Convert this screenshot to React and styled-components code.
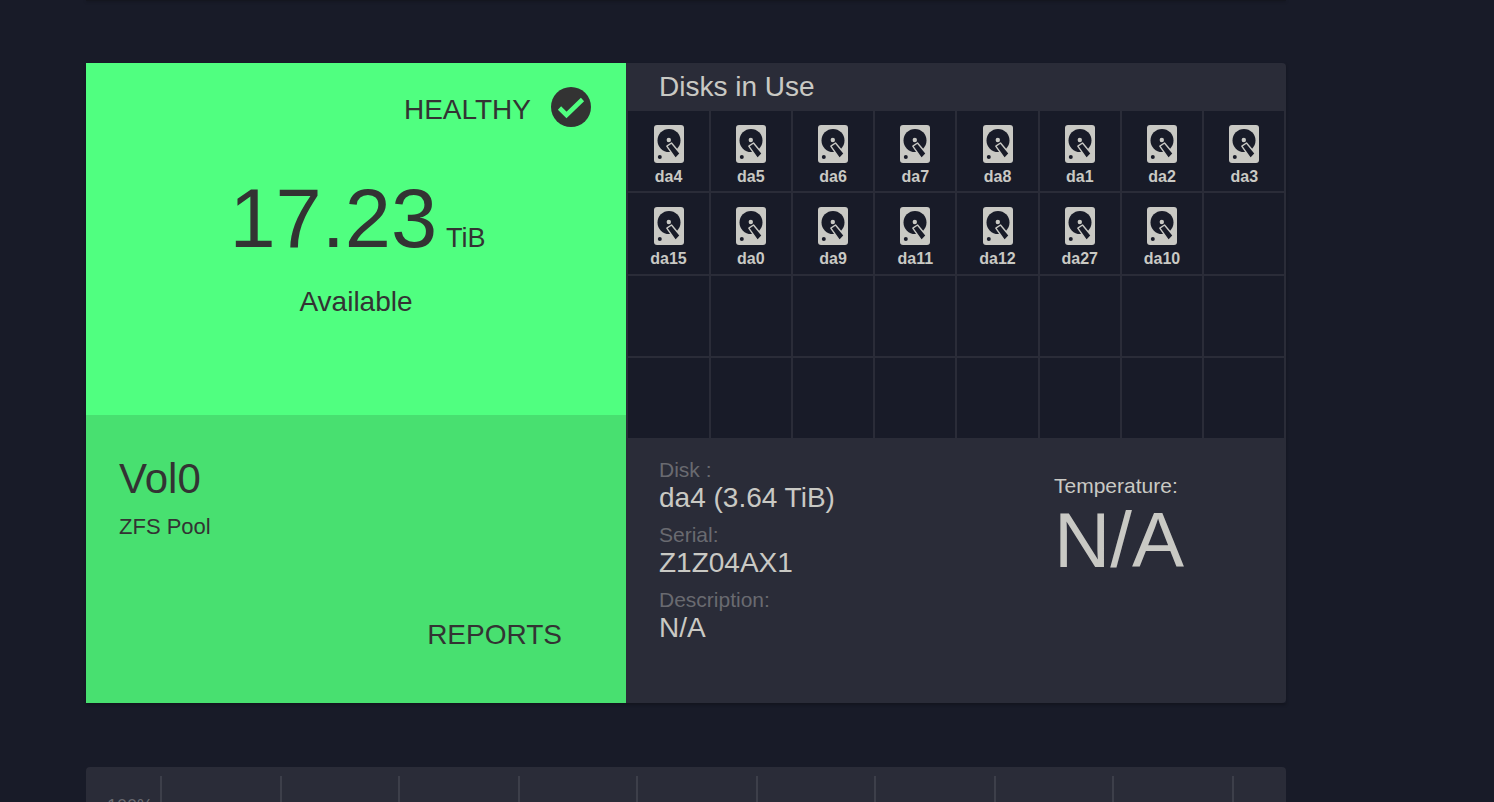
import React from "react";
import styled, { createGlobalStyle } from "styled-components";

const Global = createGlobalStyle`
  html, body { margin: 0; padding: 0; height: 802px; overflow: hidden; background: #181b28; }
  #root { height: 802px; overflow: hidden; font-family: "Liberation Sans", Arial, sans-serif; }
`;

const Page = styled.div`
  width: 1200px;
  margin-left: 86px;
  display: flex;
  flex-direction: column;
`;
const TopEdge = styled.div`
  height: 1px;
  margin-bottom: 62px;
  background: #14161f;
  box-shadow: 0 1px 3px rgba(0, 0, 0, 0.35);
`;
const PoolCard = styled.section`
  height: 640px;
  display: grid;
  grid-template-columns: 540px 660px;
  margin-bottom: 64px;
  box-shadow: 0 2px 3px rgba(0, 0, 0, 0.25);
`;
const Status = styled.div`
  display: flex;
  flex-direction: column;
`;
const StatusTop = styled.div`
  height: 352px;
  background: #50ff80;
  color: #333;
  box-sizing: border-box;
  display: flex;
  flex-direction: column;
  padding-top: 24px;
`;
const HealthRow = styled.div`
  display: flex;
  justify-content: flex-end;
  align-items: center;
  gap: 20px;
  padding-right: 35px;
  height: 40px;
`;
const HealthLabel = styled.span`
  font-size: 28px;
  line-height: 32px;
  margin-top: 6px;
`;
const Capacity = styled.div`
  display: flex;
  justify-content: center;
  align-items: baseline;
  margin-top: 48px;
  padding-left: 3px;
  height: 88px;
  line-height: 88px;
`;
const Big = styled.span`
  font-size: 83px;
`;
const Unit = styled.span`
  font-size: 27px;
  margin-left: 9px;
`;
const Available = styled.div`
  text-align: center;
  font-size: 28px;
  line-height: 30px;
  margin-top: 24px;
`;
const StatusBottom = styled.div`
  height: 288px;
  background: #48e070;
  color: #333;
  box-sizing: border-box;
  padding: 40px 64px 0 33px;
  display: flex;
  flex-direction: column;
`;
const PoolName = styled.div`
  font-size: 42px;
  line-height: 48px;
`;
const PoolType = styled.div`
  font-size: 22px;
  line-height: 24px;
  margin-top: 12px;
`;
const Reports = styled.div`
  margin-top: auto;
  margin-bottom: 53px;
  align-self: flex-end;
  font-size: 28px;
  line-height: 30px;
`;
const DiskPanel = styled.div`
  background: #2a2c38;
  border-radius: 0 4px 4px 0;
  display: flex;
  flex-direction: column;
  color: #c9c9c4;
`;
const PanelTitle = styled.div`
  height: 47px;
  box-sizing: border-box;
  padding: 8px 0 0 33px;
  font-size: 28px;
  line-height: 32px;
`;
const Grid = styled.div`
  height: 328px;
  background: #2a2c38;
  display: grid;
  grid-template-columns: repeat(8, 1fr);
  grid-template-rows: repeat(4, 1fr);
  gap: 2px;
  padding: 1px 1.6px 0 2.4px;
  box-sizing: border-box;
`;
const Cell = styled.div`
  background: #181b28;
  display: flex;
  flex-direction: column;
  align-items: center;
  padding-top: 14px;
  box-sizing: border-box;
  overflow: hidden;
`;
const DiskName = styled.div`
  font-size: 16px;
  font-weight: bold;
  line-height: 18px;
  margin-top: 5px;
`;
const Details = styled.div`
  flex: 1;
  display: grid;
  grid-template-columns: 395px 1fr;
  padding: 21px 0 0 33px;
`;
const Fact = styled.div`
  margin-bottom: 11px;
`;
const FactLabel = styled.div`
  color: #696a70;
  font-size: 21px;
  line-height: 22px;
`;
const FactValue = styled.div`
  font-size: 28px;
  line-height: 30px;
  margin-top: 2px;
`;
const Temperature = styled.div`
  padding-top: 15px;
`;
const TempLabel = styled.div`
  font-size: 21px;
  line-height: 24px;
`;
const TempValue = styled.div`
  font-size: 78px;
  line-height: 84px;
`;
const ChartCard = styled.section`
  height: 80px;
  background: #2a2c38;
  border-radius: 4px 4px 0 0;
  position: relative;
  overflow: hidden;
`;
const Tick = styled.span`
  position: absolute;
  top: 9px;
  bottom: 0;
  width: 2px;
  background: #3d3f4a;
`;
const AxisLabel = styled.span`
  position: absolute;
  left: 21px;
  top: 29px;
  font-size: 18px;
  line-height: 20px;
  color: #696a70;
`;

const Check = () => (
  <svg width="40" height="40" viewBox="0 0 40 40" aria-hidden="true">
    <circle cx="20" cy="20" r="20" fill="#333" />
    <path d="M8.5 21 L15.5 28 L31.5 12.5" fill="none" stroke="#50ff80" strokeWidth="4.6" />
  </svg>
);

const Disk = () => (
  <svg width="30" height="38" viewBox="0 0 30 38" aria-hidden="true">
    <rect width="30" height="38" rx="3" fill="#c9c9c4" />
    <circle cx="15" cy="15.5" r="11.5" fill="#181b28" />
    <circle cx="14.8" cy="15" r="2.2" fill="#c9c9c4" />
    <path
      d="M12.8 21.2 L17.5 18 L26.2 28.5 L21.5 33.5 Z"
      fill="#181b28"
      stroke="#c9c9c4"
      strokeWidth="1.4"
      strokeLinejoin="round"
    />
    <circle cx="5.8" cy="32" r="2" fill="#181b28" />
  </svg>
);

const disks = ["da4","da5","da6","da7","da8","da1","da2","da3","da15","da0","da9","da11","da12","da27","da10"];
const cells = Array.from({ length: 32 }, (_, i) => disks[i] || null);
const ticks = [74, 194, 312, 432, 550, 670, 788, 908, 1026, 1146];

export default function App() {
  return (
    <>
      <Global />
      <Page>
        <TopEdge />
        <PoolCard>
          <Status>
            <StatusTop>
              <HealthRow><HealthLabel>HEALTHY</HealthLabel><Check /></HealthRow>
              <Capacity><Big>17.23</Big><Unit>TiB</Unit></Capacity>
              <Available>Available</Available>
            </StatusTop>
            <StatusBottom>
              <PoolName>Vol0</PoolName>
              <PoolType>ZFS Pool</PoolType>
              <Reports>REPORTS</Reports>
            </StatusBottom>
          </Status>
          <DiskPanel>
            <PanelTitle>Disks in Use</PanelTitle>
            <Grid>
              {cells.map((name, i) => (
                <Cell key={i}>
                  {name && <><Disk /><DiskName>{name}</DiskName></>}
                </Cell>
              ))}
            </Grid>
            <Details>
              <div>
                <Fact><FactLabel>Disk :</FactLabel><FactValue>da4 (3.64 TiB)</FactValue></Fact>
                <Fact><FactLabel>Serial:</FactLabel><FactValue>Z1Z04AX1</FactValue></Fact>
                <Fact><FactLabel>Description:</FactLabel><FactValue>N/A</FactValue></Fact>
              </div>
              <Temperature>
                <TempLabel>Temperature:</TempLabel>
                <TempValue>N/A</TempValue>
              </Temperature>
            </Details>
          </DiskPanel>
        </PoolCard>
        <ChartCard>
          {ticks.map((x) => <Tick key={x} style={{ left: x }} />)}
          <AxisLabel>100%</AxisLabel>
        </ChartCard>
      </Page>
    </>
  );
}
